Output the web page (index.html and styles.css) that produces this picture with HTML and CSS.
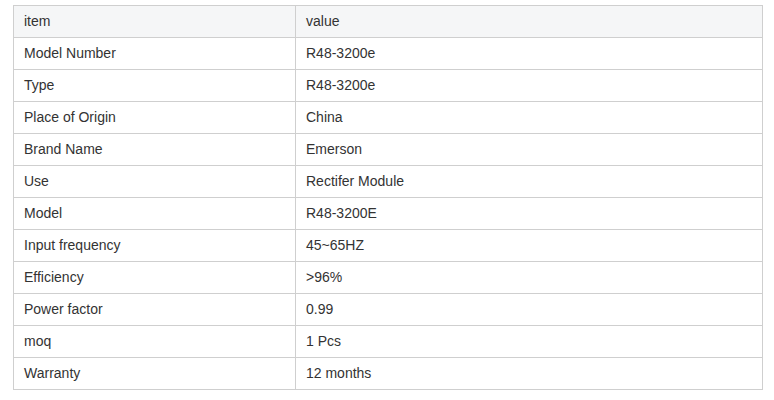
FILE: index.html
```html
<!DOCTYPE html>
<html>
<head>
<meta charset="utf-8">
<link rel="stylesheet" href="styles.css">
</head>
<body>
<div class="wrap">
<table class="spec">
<colgroup><col class="c1"><col class="c2"></colgroup>
<thead><tr><th>item</th><th>value</th></tr></thead>
<tbody>
<tr><td>Model Number</td><td>R48-3200e</td></tr>
<tr><td>Type</td><td>R48-3200e</td></tr>
<tr><td>Place of Origin</td><td>China</td></tr>
<tr><td>Brand Name</td><td>Emerson</td></tr>
<tr><td>Use</td><td>Rectifer Module</td></tr>
<tr><td>Model</td><td>R48-3200E</td></tr>
<tr><td>Input frequency</td><td>45~65HZ</td></tr>
<tr><td>Efficiency</td><td>&gt;96%</td></tr>
<tr><td>Power factor</td><td>0.99</td></tr>
<tr><td>moq</td><td>1 Pcs</td></tr>
<tr><td>Warranty</td><td>12 months</td></tr>
</tbody>
</table>
</div>
</body>
</html>
```
FILE: styles.css
```css
html, body { margin: 0; padding: 0; background: #fff; }
.wrap { padding: 5px 0 0 13px; }
.spec {
  border-collapse: collapse;
  width: 750px;
  font-family: "Liberation Sans", Arial, sans-serif;
  font-size: 14px;
  color: #333;
  table-layout: fixed;
}
.c1 { width: 282px; }
.spec th, .spec td {
  border: 1px solid #cfcfcf;
  padding: 0 10px 2px;
  text-align: left;
  font-weight: normal;
  box-sizing: border-box;
  height: 32px;
}
.spec th { background: #f5f6f7; }
```
